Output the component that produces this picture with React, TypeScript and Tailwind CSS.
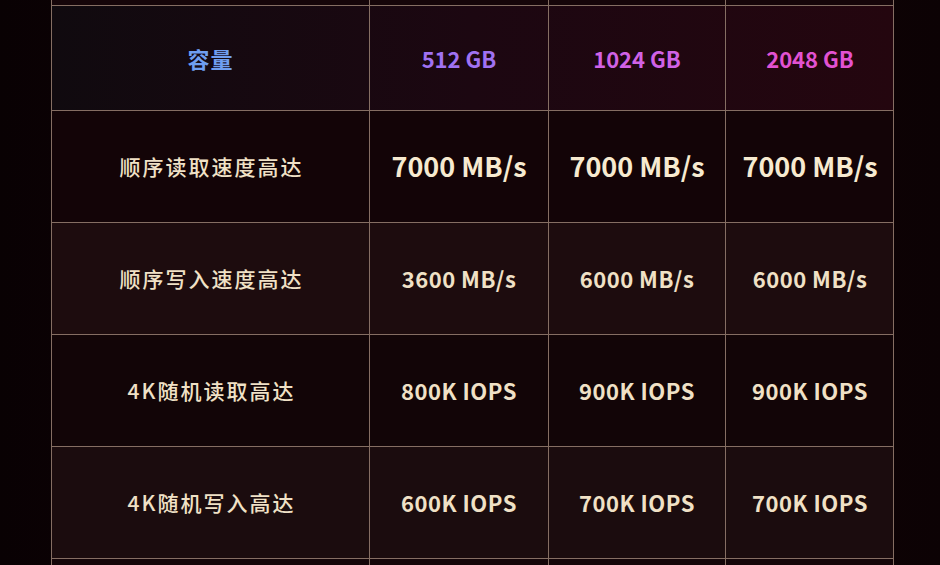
const font = "font-['Noto_Sans_CJK_SC','Noto_Sans',sans-serif]";

const cols = "grid grid-cols-[318px_179px_177px_168px]";

const rows = [
  { label: "顺序读取速度高达", values: ["7000 MB/s", "7000 MB/s", "7000 MB/s"], big: true, bg: "bg-[#130407]" },
  { label: "顺序写入速度高达", values: ["3600 MB/s", "6000 MB/s", "6000 MB/s"], big: false, bg: "bg-[#1d0c0e]" },
  { label: "4K随机读取高达", values: ["800K IOPS", "900K IOPS", "900K IOPS"], big: false, bg: "bg-[#120507]" },
  { label: "4K随机写入高达", values: ["600K IOPS", "700K IOPS", "700K IOPS"], big: false, bg: "bg-[#1b0c0e]" },
];

const Cell = ({ children, last }: any) => (
  <div className={`flex items-center justify-center ${last ? "" : "border-r border-[#856e63]"}`}>
    {children}
  </div>
);

export default function App() {
  return (
    <div className={`h-[565px] w-[940px] overflow-hidden bg-gradient-to-r from-[#090103] via-[#14040a] to-[#0c0204] ${font}`}>
      <div className="ml-[51px] w-[843px] border-x border-[#856e63]">
        {/* tail of previous row */}
        <div className={`${cols} h-[5px] bg-[#150509]`}>
          <Cell />
          <Cell />
          <Cell />
          <Cell last />
        </div>

        {/* header */}
        <div className={`${cols} h-[105px] border-t border-[#856e63] bg-gradient-to-r from-[#100a0f] via-[#1c0711] to-[#24060f]`}>
          <Cell>
            <span className="text-[22px] font-bold tracking-[1px] text-[#6f9ef0]">容量</span>
          </Cell>
          <Cell>
            <span className="text-[22px] font-bold text-[#a072f2]">512 GB</span>
          </Cell>
          <Cell>
            <span className="text-[22px] font-bold text-[#d062e6]">1024 GB</span>
          </Cell>
          <Cell last>
            <span className="text-[22px] font-bold text-[#e252d2]">2048 GB</span>
          </Cell>
        </div>

        {rows.map((r) => (
          <div key={r.label} className={`${cols} h-[112px] border-t border-[#856e63] ${r.bg}`}>
            <Cell>
              <span className="pl-[2px] text-[21px] font-medium tracking-[2px] text-[#f0e1c6]">{r.label}</span>
            </Cell>
            {r.values.map((v, i) => (
              <Cell key={i} last={i === 2}>
                <span
                  className={
                    r.big
                      ? "text-[27px] font-bold text-[#f7ead0]"
                      : "text-[22px] font-semibold tracking-[0.5px] text-[#f0e1c6]"
                  }
                >
                  {v}
                </span>
              </Cell>
            ))}
          </div>
        ))}

        {/* start of next row */}
        <div className={`${cols} h-[20px] border-t border-[#856e63] bg-[#140508]`}>
          <Cell />
          <Cell />
          <Cell />
          <Cell last />
        </div>
      </div>
    </div>
  );
}
